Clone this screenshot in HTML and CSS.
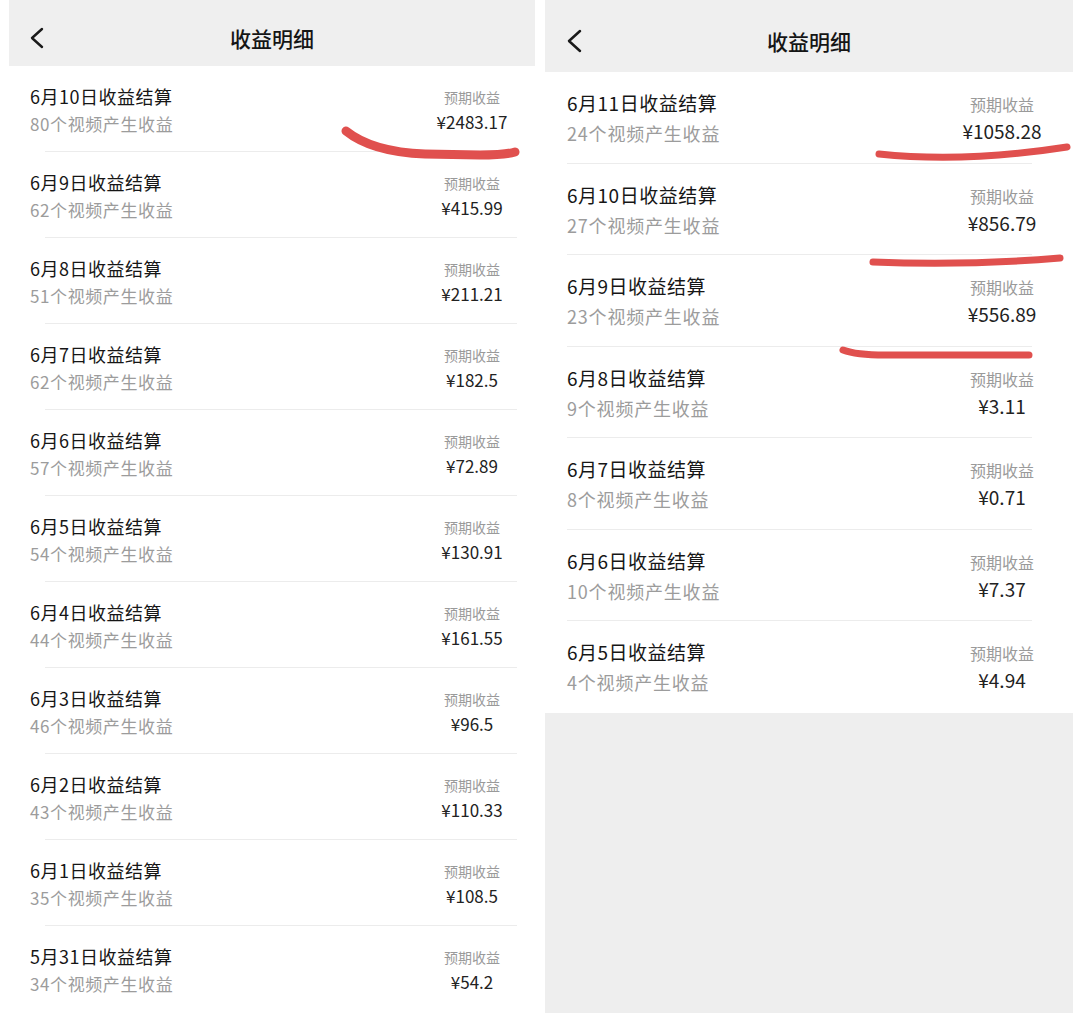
FILE: index.html
```html
<!DOCTYPE html>
<html lang="zh-CN">
<head>
<meta charset="utf-8">
<title>收益明细</title>
<link rel="stylesheet" href="styles.css">
</head>
<body>
<div class="screens">
  <section class="panel panel-left">
    <header class="bar">
      <span class="back"><svg width="14" height="22" viewBox="0 0 14 22"><polyline points="12,2 2,11 12,20" fill="none" stroke="#1a1a1a" stroke-width="2.4" stroke-linecap="round" stroke-linejoin="round"/></svg></span>
      <h1 class="bar-title">收益明细</h1>
      <span></span>
    </header>
    <ul class="list">
      <li class="row"><div class="info"><div class="title">6月10日收益结算</div><div class="sub">80个视频产生收益</div></div><div class="money"><div class="label">预期收益</div><div class="amount">¥2483.17</div></div></li>
      <li class="row"><div class="info"><div class="title">6月9日收益结算</div><div class="sub">62个视频产生收益</div></div><div class="money"><div class="label">预期收益</div><div class="amount">¥415.99</div></div></li>
      <li class="row"><div class="info"><div class="title">6月8日收益结算</div><div class="sub">51个视频产生收益</div></div><div class="money"><div class="label">预期收益</div><div class="amount">¥211.21</div></div></li>
      <li class="row"><div class="info"><div class="title">6月7日收益结算</div><div class="sub">62个视频产生收益</div></div><div class="money"><div class="label">预期收益</div><div class="amount">¥182.5</div></div></li>
      <li class="row"><div class="info"><div class="title">6月6日收益结算</div><div class="sub">57个视频产生收益</div></div><div class="money"><div class="label">预期收益</div><div class="amount">¥72.89</div></div></li>
      <li class="row"><div class="info"><div class="title">6月5日收益结算</div><div class="sub">54个视频产生收益</div></div><div class="money"><div class="label">预期收益</div><div class="amount">¥130.91</div></div></li>
      <li class="row"><div class="info"><div class="title">6月4日收益结算</div><div class="sub">44个视频产生收益</div></div><div class="money"><div class="label">预期收益</div><div class="amount">¥161.55</div></div></li>
      <li class="row"><div class="info"><div class="title">6月3日收益结算</div><div class="sub">46个视频产生收益</div></div><div class="money"><div class="label">预期收益</div><div class="amount">¥96.5</div></div></li>
      <li class="row"><div class="info"><div class="title">6月2日收益结算</div><div class="sub">43个视频产生收益</div></div><div class="money"><div class="label">预期收益</div><div class="amount">¥110.33</div></div></li>
      <li class="row"><div class="info"><div class="title">6月1日收益结算</div><div class="sub">35个视频产生收益</div></div><div class="money"><div class="label">预期收益</div><div class="amount">¥108.5</div></div></li>
      <li class="row"><div class="info"><div class="title">5月31日收益结算</div><div class="sub">34个视频产生收益</div></div><div class="money"><div class="label">预期收益</div><div class="amount">¥54.2</div></div></li>
    </ul>
  </section>
  <section class="panel panel-right">
    <header class="bar">
      <span class="back"><svg width="15" height="24" viewBox="0 0 15 24"><polyline points="13,2 2,12 13,22" fill="none" stroke="#1a1a1a" stroke-width="2.5" stroke-linecap="round" stroke-linejoin="round"/></svg></span>
      <h1 class="bar-title">收益明细</h1>
      <span></span>
    </header>
    <ul class="list">
      <li class="row"><div class="info"><div class="title">6月11日收益结算</div><div class="sub">24个视频产生收益</div></div><div class="money"><div class="label">预期收益</div><div class="amount">¥1058.28</div></div></li>
      <li class="row"><div class="info"><div class="title">6月10日收益结算</div><div class="sub">27个视频产生收益</div></div><div class="money"><div class="label">预期收益</div><div class="amount">¥856.79</div></div></li>
      <li class="row"><div class="info"><div class="title">6月9日收益结算</div><div class="sub">23个视频产生收益</div></div><div class="money"><div class="label">预期收益</div><div class="amount">¥556.89</div></div></li>
      <li class="row"><div class="info"><div class="title">6月8日收益结算</div><div class="sub">9个视频产生收益</div></div><div class="money"><div class="label">预期收益</div><div class="amount">¥3.11</div></div></li>
      <li class="row"><div class="info"><div class="title">6月7日收益结算</div><div class="sub">8个视频产生收益</div></div><div class="money"><div class="label">预期收益</div><div class="amount">¥0.71</div></div></li>
      <li class="row"><div class="info"><div class="title">6月6日收益结算</div><div class="sub">10个视频产生收益</div></div><div class="money"><div class="label">预期收益</div><div class="amount">¥7.37</div></div></li>
      <li class="row"><div class="info"><div class="title">6月5日收益结算</div><div class="sub">4个视频产生收益</div></div><div class="money"><div class="label">预期收益</div><div class="amount">¥4.94</div></div></li>
    </ul>
    <div class="empty"></div>
  </section>
</div>
<svg class="marks" width="1080" height="1013" viewBox="0 0 1080 1013">
  <g fill="none" stroke="#e0504e" stroke-linecap="round" stroke-linejoin="round">
    <path d="M346 131 Q 372 152 425 154 L 480 155 Q 505 155 515 152" stroke-width="9"/>
    <path d="M879 154 Q 965 163 1067 147" stroke-width="7"/>
    <path d="M873 262 Q 965 266 1060 258" stroke-width="7"/>
    <path d="M843 350 Q 856 355 885 355 L 1029 355" stroke-width="7"/>
  </g>
</svg>
</body>
</html>
```

FILE: styles.css
```css
* { box-sizing: border-box; }
html, body {
  margin: 0;
  padding: 0;
  background: #ffffff;
}
body {
  width: 1080px;
  height: 1013px;
  overflow: hidden;
  position: relative;
  font-family: "Noto Sans CJK SC", "Noto Sans", "Liberation Sans", sans-serif;
  color: #222;
}
.screens {
  display: flex;
  gap: 10px;
  padding-left: 9px;
  height: 1013px;
}
.panel {
  display: flex;
  flex-direction: column;
  background: #fff;
}
.panel-left { width: 526px; }
.panel-right { width: 528px; }

.bar {
  display: grid;
  grid-template-columns: 1fr auto 1fr;
  align-items: center;
  background: #efefef;
}
.panel-left .bar { height: 66px; padding: 10px 21px 0; }
.panel-right .bar { height: 72px; padding: 10px 22px 0; }
.back { display: flex; align-items: center; }
.bar-title {
  margin: 0;
  font-size: 21px;
  font-weight: 500;
  color: #151515;
}

.list {
  list-style: none;
  margin: 0;
  padding: 0;
}
.row {
  display: flex;
  justify-content: space-between;
  align-items: flex-start;
  background-image: linear-gradient(#ececec, #ececec);
  background-repeat: no-repeat;
  background-position: 36px 100%;
  background-size: calc(100% - 54px) 1px;
}
.row:last-child { background-image: none; }

.title { color: #161616; font-weight: 400; }
.sub { color: #9c9c9c; }
.label { color: #9a9a9a; }
.amount { color: #222; }
.money { text-align: center; }

/* left panel */
.panel-left .row {
  height: 86px;
  padding: 17px 21px 0 21px;
}
.panel-left .title { font-size: 18px; line-height: 26px; letter-spacing: 0.5px; }
.panel-left .sub { font-size: 17px; line-height: 30px; letter-spacing: 0.6px; }
.panel-left .money { width: 84px; padding-top: 2px; }
.panel-left .label { font-size: 14px; line-height: 24px; }
.panel-left .amount { font-size: 17px; line-height: 26px; }

/* right panel */
.panel-right .row {
  height: 91.5px;
  padding: 18px 25px 0 22px;
  background-position: 22px 100%;
  background-size: calc(100% - 63px) 1px;
}
.panel-right .title { font-size: 19px; line-height: 26px; letter-spacing: 0.5px; }
.panel-right .sub { font-size: 18px; line-height: 34px; letter-spacing: 0.8px; }
.panel-right .money { width: 92px; padding-top: 2px; }
.panel-right .label { font-size: 16px; line-height: 24px; }
.panel-right .amount { font-size: 19px; line-height: 30px; }

.empty {
  flex: 1;
  background: #eeeeee;
}

.marks {
  position: absolute;
  left: 0;
  top: 0;
  pointer-events: none;
}
```
